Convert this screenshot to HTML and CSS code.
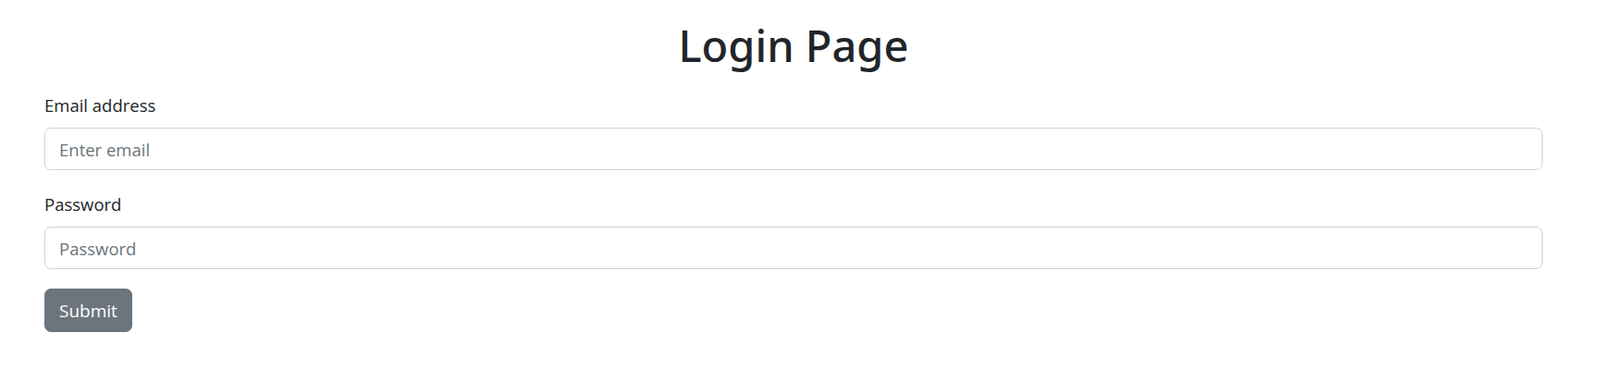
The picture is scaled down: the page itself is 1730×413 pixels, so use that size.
FILE: index.html
```html
<!DOCTYPE html>
<html lang="en">
<head>
<meta charset="utf-8">
<title>Login Page</title>
<link rel="stylesheet" href="styles.css">
</head>
<body>
<div class="container">
  <h1 class="title">Login Page</h1>
  <form class="form">
    <div class="field">
      <label class="label" for="email">Email address</label>
      <input class="control" type="email" id="email" placeholder="Enter email">
    </div>
    <div class="field field-last">
      <label class="label" for="password">Password</label>
      <input class="control" type="password" id="password" placeholder="Password">
    </div>
    <button class="btn" type="submit">Submit</button>
  </form>
</div>
</body>
</html>
```

FILE: styles.css
```css
* { box-sizing: border-box; }
html, body { margin: 0; padding: 0; background: #fff; }
body {
  font-family: "Open Sans", "Noto Sans", "DejaVu Sans", sans-serif;
  font-size: 19.2px;
  line-height: 1.5;
  color: #212529;
}
.container {
  margin: 0 62px 0 48px;
}
.title {
  margin: 0;
  padding-top: 21px;
  padding-bottom: 23px;
  text-align: center;
  font-family: "Noto Sans", "Open Sans", sans-serif;
  font-size: 47px;
  font-weight: 500;
  line-height: 1.2;
}
.field { margin-bottom: 23px; }
.field-last { margin-bottom: 21px; }
.label {
  display: block;
  margin-bottom: 10px;
  font-size: 18.5px;
  line-height: 28px;
}
.control {
  display: block;
  width: 100%;
  height: 46px;
  padding: 7px 15px;
  font: inherit;
  font-size: 18.5px;
  color: #212529;
  background: #fff;
  border: 1px solid #ced4da;
  border-radius: 7px;
  outline: none;
}
.control::placeholder { color: #6c757d; }
.btn {
  display: inline-block;
  height: 47px;
  padding: 0 15px;
  font: inherit;
  font-size: 19px;
  color: #fff;
  background: #6c757d;
  border: 1px solid #6c757d;
  border-radius: 7px;
}
```
